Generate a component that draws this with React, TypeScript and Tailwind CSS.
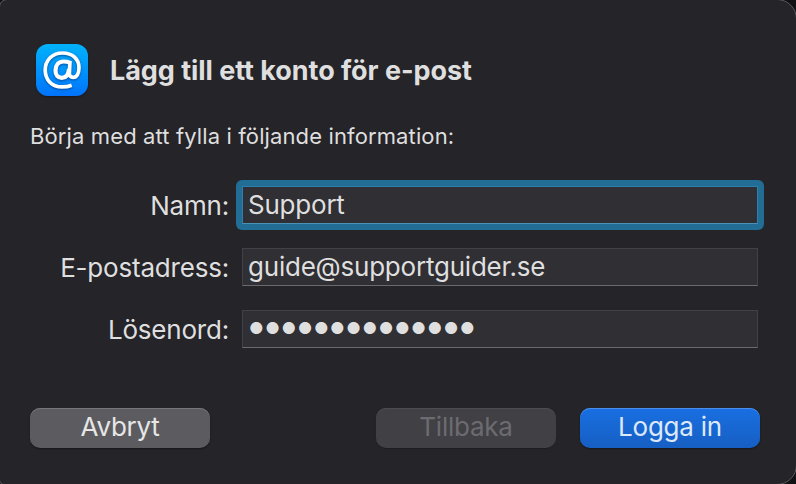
import { useState } from 'react';
import clsx from 'clsx';

function MailAccountIcon() {
  return (
    <svg
      width="52"
      height="52"
      viewBox="0 0 52 52"
      fill="none"
      className="shrink-0 rounded-xl bg-linear-to-b from-[#00b2fa] to-[#0273fb] shadow-[0_1px_2px_rgba(0,0,0,0.35)]"
    >
      <g
        stroke="#fff"
        strokeLinecap="butt"
        strokeLinejoin="round"
        className="drop-shadow-[0_1px_1px_rgba(0,40,110,0.65)]"
      >
        <path
          strokeWidth="3.7"
          d="M35.7 41.2C32.8 42.4 29.4 42.9 26 42.9C15.8 42.9 9.2 36 9.2 26.1C9.2 16 16.5 9 26.6 9C36.6 9 43 15.2 43 23.6C43 29.5 40.7 33.4 37.2 33.4C34.6 33.4 33.3 31.8 33.4 29.2L34 16.8"
        />
        <path
          strokeWidth="4.2"
          d="M33 25C32.6 30.2 30.2 33.9 25.8 33.9C21.8 33.9 19.5 31 19.5 26.6C19.5 21 22.7 17.5 27.6 17.5C29.6 17.5 31.8 17.8 33.4 18.6"
        />
      </g>
    </svg>
  );
}

interface FieldProps {
  id: string;
  label: string;
  value: string;
  focused?: boolean;
  masked?: boolean;
  onChange: (value: string) => void;
}

function Field({ id, label, value, focused, masked, onChange }: FieldProps) {
  return (
    <div className="flex h-[38px] items-center">
      <label
        htmlFor={id}
        className="mr-[7px] w-[217px] pt-0.5 text-right text-[26px] leading-8 tracking-[-0.2px] whitespace-nowrap"
      >
        {label}
      </label>
      <div className={clsx('rounded-md p-1.5', focused && 'bg-[#216d95]')}>
        <input
          id={id}
          type="text"
          spellCheck={false}
          value={masked ? '●'.repeat(value.length) : value}
          onChange={(e) => onChange(e.target.value)}
          className={clsx(
            'block h-[38px] w-[516px] border bg-[#302f34] outline-none',
            focused ? 'border-[#2d80ad] border-b-[#4a91b6]' : 'border-[#424147] border-b-[#6a696d]',
            masked ? 'pb-0.5 pl-1.5 text-[16px] tracking-[1.6px]' : 'pb-0.5 pl-[5px] text-[26px] tracking-[-0.22px]'
          )}
        />
      </div>
    </div>
  );
}

export default function App() {
  const [name, setName] = useState('Support');
  const [email, setEmail] = useState('guide@supportguider.se');
  const [password, setPassword] = useState('losenord123456');

  return (
    <div className="h-[484px] w-[796px] overflow-hidden bg-[#111013] font-['Inter',sans-serif] text-[#dfdfdf]">
      <div className="-m-px h-[486px] w-[798px] rounded-tl-[8px] rounded-tr-[20px] rounded-br-[20px] rounded-bl-[5px] border border-[#5b5a5f] bg-[#252429] pt-[44px] pl-[30px]">
        <div className="flex items-center gap-[22px] pl-1.5">
          <MailAccountIcon />
          <h1 className="pt-0.5 text-[27px] leading-8 font-bold tracking-[-0.05px] whitespace-nowrap">
            Lägg till ett konto för e-post
          </h1>
        </div>

        <p className="mt-6 text-[22px] leading-8 tracking-[0.12px] whitespace-nowrap">
          Börja med att fylla i följande information:
        </p>

        <form className="mt-[34px]" onSubmit={(e) => e.preventDefault()}>
          <div className="-ml-[18px] flex flex-col gap-6">
            <Field id="name" label="Namn:" value={name} focused onChange={setName} />
            <Field id="email" label="E-postadress:" value={email} onChange={setEmail} />
            <Field id="password" label="Lösenord:" value={password} masked onChange={setPassword} />
          </div>

          <div className="mt-[60px] flex text-[26px] tracking-[-0.25px]">
            <button
              type="button"
              className="h-10 w-[180px] rounded-[10px] bg-[#5c5b5f] pb-0.5 leading-8 text-[#e6e6e6] shadow-[inset_0_1px_0_#77767a,0_1px_2px_rgba(0,0,0,0.4)]"
            >
              Avbryt
            </button>
            <button
              type="button"
              disabled
              className="ml-[166px] h-10 w-[180px] rounded-[10px] bg-[#414045] pb-0.5 leading-8 text-[#6c6b70] shadow-[inset_0_1px_0_#4d4c51,0_1px_1px_rgba(0,0,0,0.2)]"
            >
              Tillbaka
            </button>
            <button
              type="submit"
              className="ml-6 h-10 w-[180px] rounded-[10px] bg-linear-to-b from-[#196fe2] to-[#165fc3] pb-0.5 leading-8 text-[#dde8f9] shadow-[inset_0_1px_0_#4b8de8,0_1px_2px_rgba(0,0,0,0.4)]"
            >
              Logga in
            </button>
          </div>
        </form>
      </div>
    </div>
  );
}
